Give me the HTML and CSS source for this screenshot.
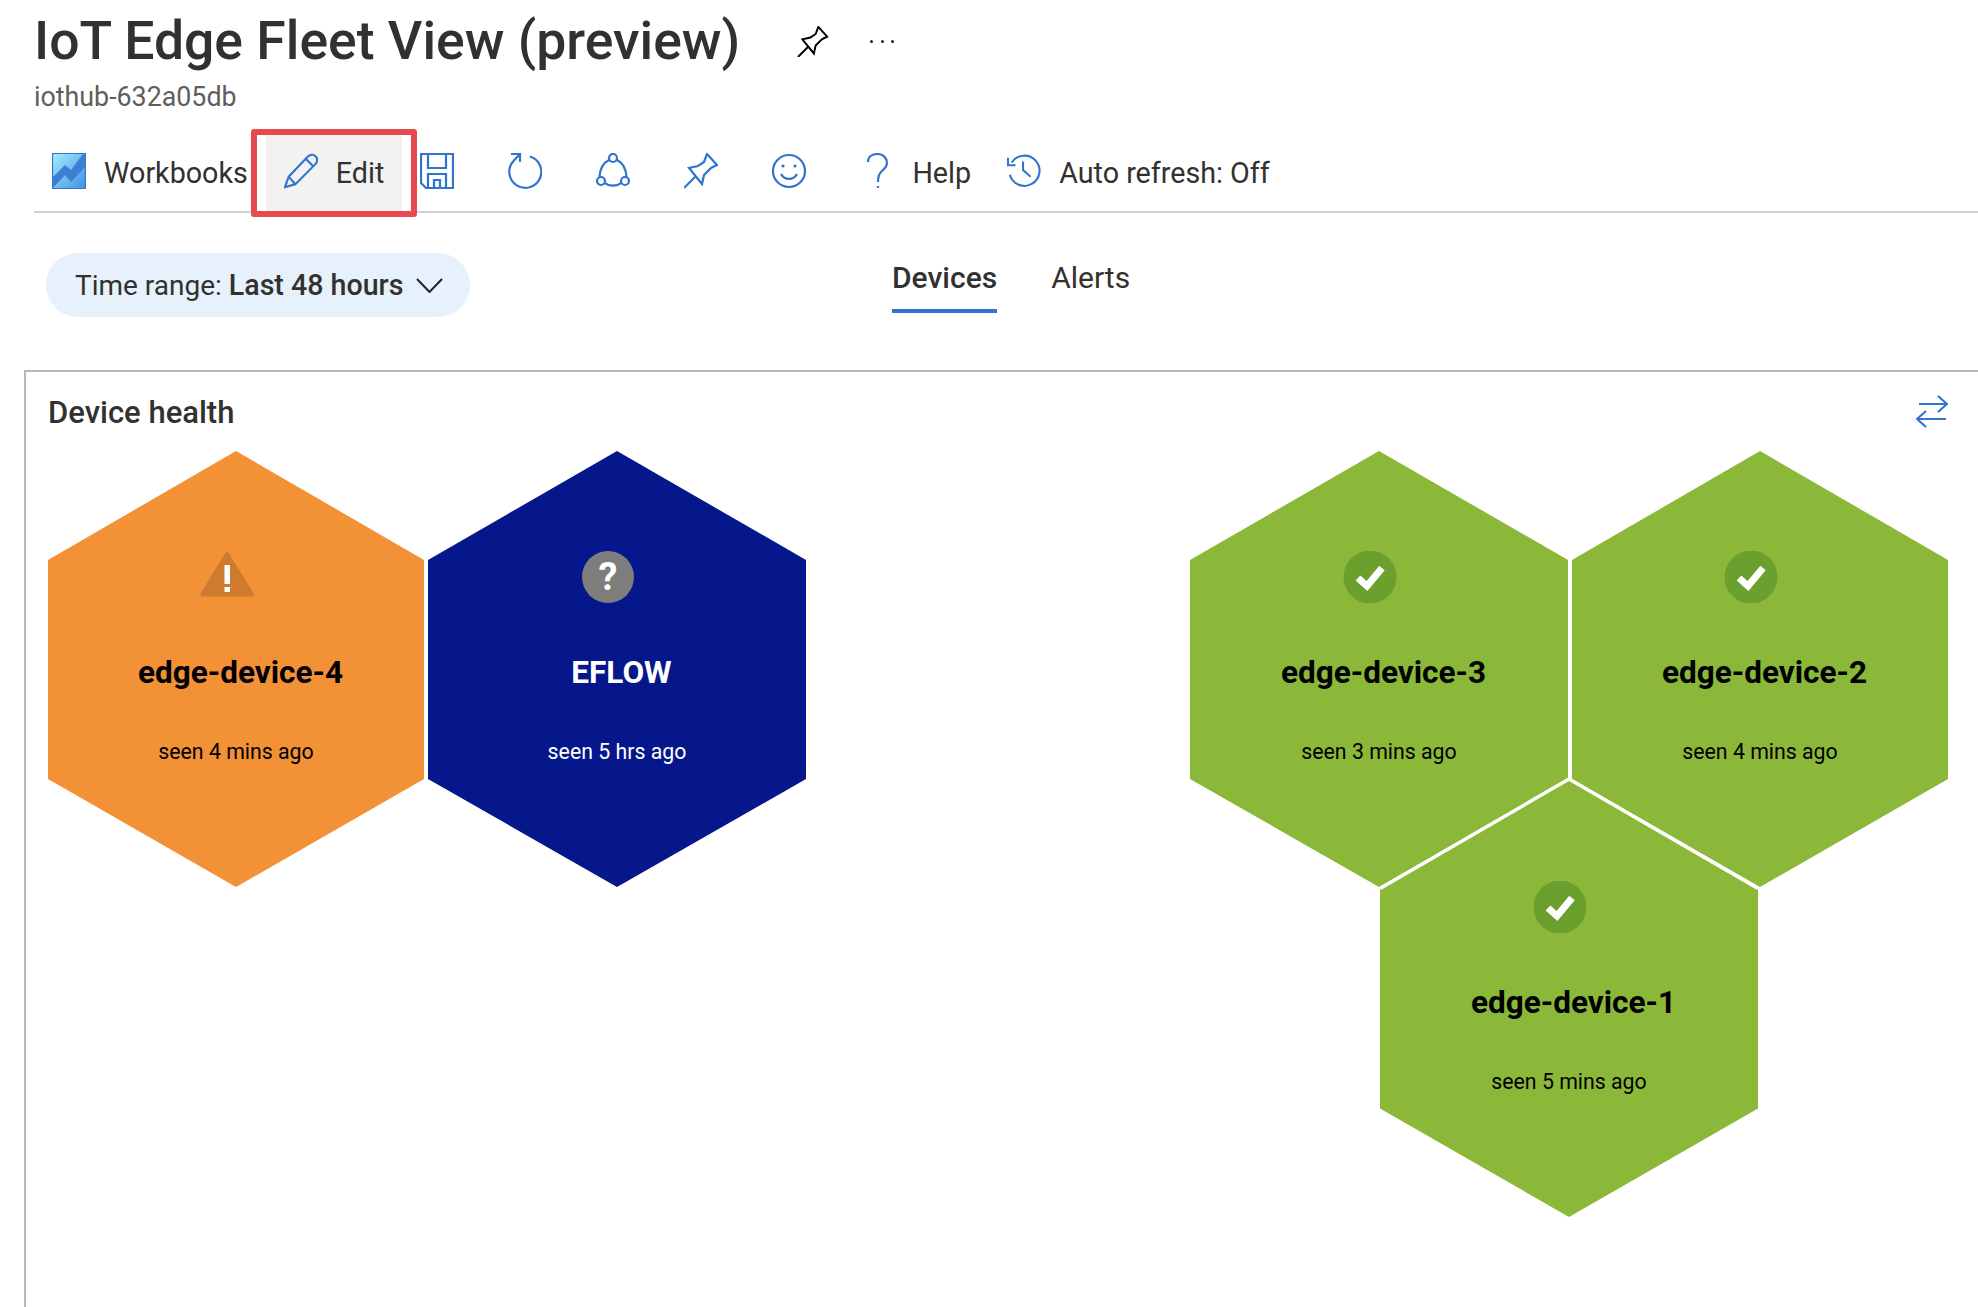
FILE: index.html
```html
<!DOCTYPE html>
<html lang="en">
<head>
  <meta charset="UTF-8" />
  <title>IoT Edge Fleet View (preview)</title>
  <link rel="stylesheet" href="styles.css">
</head>
<body>

  <header class="title-bar">
    <div class="title-row">
      <h1>IoT Edge Fleet View (preview)</h1>
      <svg class="title-pin" viewBox="0 0 34 35"><path d="M23 1 33 12 27 15 20 22 18 31 5 15 14 13 20 9ZM11 24 0 35"/></svg>
      <div class="title-more"><span></span><span></span><span></span></div>
    </div>
    <p class="subtitle">iothub-632a05db</p>
  </header>

  <nav class="toolbar">
    <a class="tool">
      <svg class="tool-icon" viewBox="0 0 34 36">
        <defs>
          <linearGradient id="wb" x1="0" y1="0" x2="1" y2="1">
            <stop offset="0" stop-color="#a6effd"/>
            <stop offset="1" stop-color="#3f8fe4"/>
          </linearGradient>
        </defs>
        <rect width="34" height="36" rx="2" fill="url(#wb)"/>
        <path class="wb-band" d="M0 25 13 12 19 17 31 1 34 3V13L19 29 13 22 0 36Z"/>
      </svg>
      <span class="tool-label">Workbooks</span>
    </a>
    <a class="tool tool-marked">
      <svg class="tool-icon" viewBox="0 0 36 36"><path d="M1 35 5 24 25 3C28 0 32 0 34 3 36 6 35 9 33 11L12 32ZM5 24 12 32M23 5 31 13"/></svg>
      <span class="tool-label">Edit</span>
    </a>
    <a class="tool">
      <svg class="tool-icon" viewBox="0 0 34 36"><path d="M1 1H33V35H6L1 30ZM8 1V15H26V1M8 35V21H26V35M14 35V27H20V35"/></svg>
    </a>
    <a class="tool">
      <svg class="tool-icon" viewBox="0 0 34 36"><path d="M22 3.5A16 16 0 1 1 5.5 8L12 1M3 1H12V9"/></svg>
    </a>
    <a class="tool">
      <svg class="tool-icon" viewBox="0 0 34 36"><circle cx="17" cy="5" r="4"/><circle cx="5" cy="28" r="4"/><circle cx="29" cy="28" r="4"/><path d="M13 7C7 10 4 16 3.5 24M21 7C27 10 30 16 30.5 24M9 30C13 33.5 21 33.5 25 30"/></svg>
    </a>
    <a class="tool">
      <svg class="tool-icon" viewBox="0 0 34 36"><path d="M23 1 33 12 27 15 20 22 18 31 5 15 14 13 20 9ZM11 24 0 35"/></svg>
    </a>
    <a class="tool">
      <svg class="tool-icon" viewBox="0 0 34 36"><circle cx="17" cy="18" r="16"/><path d="M9 21A9 9 0 0 0 25 21"/><circle class="solid" cx="11" cy="13" r="1.6"/><circle class="solid" cx="23" cy="13" r="1.6"/></svg>
    </a>
    <a class="tool">
      <svg class="tool-icon" viewBox="0 0 34 36"><path d="M8 9C8 4 12 1 17.5 1 23 1 27 5 27 10 27 14 24 16 21 19 19 21 18 23 18 29M18 33V35"/></svg>
      <span class="tool-label">Help</span>
    </a>
    <a class="tool">
      <svg class="tool-icon" viewBox="0 0 36 36"><path d="M3 22A16 16 0 1 0 5 9M1 4V12H9M17 8V17L25 24"/></svg>
      <span class="tool-label">Auto refresh: Off</span>
    </a>
  </nav>

  <div class="filter-row">
    <button class="time-pill">
      Time range:&nbsp;<b>Last 48 hours</b>
      <svg class="chevron" viewBox="0 0 27 15"><path d="M1 1 13.500 14 26 1"/></svg>
    </button>
    <div class="tabs">
      <a class="tab tab-active">Devices</a>
      <a class="tab">Alerts</a>
    </div>
  </div>

  <main class="panel">
    <div class="panel-head">
      <h2>Device health</h2>
      <svg class="swap" viewBox="0 0 32 33"><path d="M3 9H31M22 1 31 9 22 17M30 24H1M10 16 1 24 10 32"/></svg>
    </div>

    <div class="hex-map">
      <div class="hex hex-4 warn">
        <svg class="hex-shape" viewBox="0 0 378 436" preserveAspectRatio="none"><polygon points="189,0 378,109 378,328 189,436 0,328 0,109"/></svg>
        <div class="hex-icon">
          <svg viewBox="0 0 54 52"><path class="warn-tri" d="M27 4 51 43H3Z"/><rect class="warn-mark" x="24.500" y="14" width="5.500" height="19"/><rect class="warn-mark" x="24.500" y="36" width="5.500" height="5"/></svg>
        </div>
        <div class="hex-name">edge-device-4</div>
        <div class="hex-seen">seen 4 mins ago</div>
      </div>

      <div class="hex hex-eflow unknown">
        <svg class="hex-shape" viewBox="0 0 378 436" preserveAspectRatio="none"><polygon points="189,0 378,109 378,328 189,436 0,328 0,109"/></svg>
        <div class="hex-icon"><span class="question">?</span></div>
        <div class="hex-name">EFLOW</div>
        <div class="hex-seen">seen 5 hrs ago</div>
      </div>

      <div class="hex hex-3 ok">
        <svg class="hex-shape" viewBox="0 0 378 436" preserveAspectRatio="none"><polygon points="189,0 378,109 378,328 189,436 0,328 0,109"/></svg>
        <div class="hex-icon">
          <svg viewBox="0 0 54 52"><circle class="ok-badge" cx="27" cy="26" r="26.500"/><path class="ok-check" d="M15 27 24 35 39 17"/></svg>
        </div>
        <div class="hex-name">edge-device-3</div>
        <div class="hex-seen">seen 3 mins ago</div>
      </div>

      <div class="hex hex-2 ok">
        <svg class="hex-shape" viewBox="0 0 378 436" preserveAspectRatio="none"><polygon points="189,0 378,109 378,328 189,436 0,328 0,109"/></svg>
        <div class="hex-icon">
          <svg viewBox="0 0 54 52"><circle class="ok-badge" cx="27" cy="26" r="26.500"/><path class="ok-check" d="M15 27 24 35 39 17"/></svg>
        </div>
        <div class="hex-name">edge-device-2</div>
        <div class="hex-seen">seen 4 mins ago</div>
      </div>

      <div class="hex hex-1 ok">
        <svg class="hex-shape" viewBox="0 0 378 436" preserveAspectRatio="none"><polygon points="189,0 378,109 378,328 189,436 0,328 0,109"/><polyline class="hex-seam" points="0,109 189,0 378,109"/></svg>
        <div class="hex-icon">
          <svg viewBox="0 0 54 52"><circle class="ok-badge" cx="27" cy="26" r="26.500"/><path class="ok-check" d="M15 27 24 35 39 17"/></svg>
        </div>
        <div class="hex-name">edge-device-1</div>
        <div class="hex-seen">seen 5 mins ago</div>
      </div>
    </div>
  </main>

</body>
</html>
```

FILE: styles.css
```css
html, body {
  height: 100%;
}

body {
  margin: 0;
  display: flex;
  flex-direction: column;
  overflow: hidden;
  background: #fff;
  color: #323130;
  font-family: Roboto, sans-serif;
}

/* title */
.title-bar {
  padding: 13px 0 18px 34px;
}

.title-row {
  display: flex;
  align-items: center;
  height: 56px;
}

h1 {
  margin: 0;
  font-size: 53.5px;
  font-weight: 500;
  line-height: 56px;
}

.title-pin {
  width: 34px;
  height: 31px;
  margin: 0 0 0 56px;
  fill: none;
  stroke: #000;
  stroke-width: 2.2;
}

.title-more {
  display: flex;
  gap: 7.5px;
  margin-left: 40px;
}

.title-more span {
  width: 3px;
  height: 3px;
  border-radius: 50%;
  background: #222;
}

.subtitle {
  margin: 12px 0 0;
  color: #605e5c;
  font-size: 26.8px;
  line-height: 32px;
}

/* toolbar */
.toolbar {
  display: flex;
  align-items: center;
  height: 80px;
  margin: 0 0 0 34px;
  border-bottom: 2px solid #d2d0ce;
  font-size: 28.7px;
}

.tool {
  position: relative;
  display: flex;
  align-items: center;
  height: 100%;
  padding: 0 18px;
}

.tool-icon {
  width: 34px;
  height: 36px;
  margin-right: 18px;
  fill: none;
  stroke: #2f74d0;
  stroke-width: 2.2;
}

.tool-label {
  padding-top: 4px;
}

.tool-icon .solid {
  fill: #2f74d0;
  stroke: none;
}

.wb-band {
  fill: #3c7ed3;
  stroke: none;
}

.tool-marked {
  background: #f3f2f1;
}

/* the red box drawn over the Edit button */
.tool-marked::after {
  content: "";
  position: absolute;
  left: -15px;
  right: -15px;
  top: -2px;
  bottom: -6px;
  border: 6px solid #e8484f;
  border-radius: 3px;
}

/* filter row */
.filter-row {
  position: relative;
  height: 157px;
}

.time-pill {
  position: absolute;
  left: 46px;
  top: 40px;
  display: flex;
  align-items: center;
  width: 424px;
  height: 64px;
  padding: 0 0 0 29px;
  border: 0;
  border-radius: 32px;
  background: #e6f1fb;
  color: #323130;
  font: inherit;
  font-size: 28px;
}

.time-pill b {
  font-size: 28.6px;
  font-weight: 500;
}

.chevron {
  width: 27px;
  height: 15px;
  margin-left: 13px;
  fill: none;
  stroke: #222;
  stroke-width: 2;
}

.tabs {
  position: absolute;
  left: 892px;
  top: 45px;
  display: flex;
  gap: 54px;
  font-size: 30px;
}

.tab {
  height: 51px;
  line-height: 40px;
}

.tab-active {
  font-weight: 500;
  border-bottom: 4px solid #2f74d0;
}

/* panel */
.panel {
  flex: 1;
  margin-left: 24px;
  padding: 0 30px 0 22px;
  border-top: 2px solid #b8b8b8;
  border-left: 2px solid #b8b8b8;
}

.panel-head {
  display: flex;
  align-items: center;
  justify-content: space-between;
  height: 79px;
}

h2 {
  margin: 2px 0 0;
  font-size: 31px;
  font-weight: 500;
}

.swap {
  width: 32px;
  height: 33px;
  fill: none;
  stroke: #2f74d0;
  stroke-width: 2.2;
}

.hex-map {
  position: relative;
  height: 766px;
}

.hex {
  position: absolute;
  display: flex;
  flex-direction: column;
  align-items: center;
  width: 378px;
  height: 436px;
  padding-top: 100px;
  box-sizing: border-box;
  color: #000;
}

.hex-4 { left: 0; top: 0; width: 376px; }
.hex-eflow { left: 380px; top: 0; }
.hex-3 { left: 1142px; top: 0; }
.hex-2 { left: 1524px; top: 0; width: 376px; }
.hex-1 { left: 1332px; top: 328px; height: 438px; padding-top: 102px; }

.hex-shape {
  position: absolute;
  left: 0;
  top: 0;
  width: 100%;
  height: 100%;
  overflow: visible;
}

.hex-seam {
  fill: none;
  stroke: #fff;
  stroke-width: 3.5;
}

.warn .hex-shape { fill: #f29136; }
.unknown .hex-shape { fill: #05178a; }
.ok .hex-shape { fill: #8bb838; }

.unknown {
  color: #fff;
}

.hex-icon {
  position: relative;
  width: 54px;
  height: 52px;
  margin-right: 18px;
}

.hex-icon svg {
  display: block;
  width: 54px;
  height: 52px;
}

.warn-tri {
  fill: #cd7c2f;
  stroke: #cd7c2f;
  stroke-width: 5;
  stroke-linejoin: round;
}

.warn-mark {
  fill: #fff;
}

.question {
  display: block;
  width: 52px;
  height: 52px;
  margin-left: 1px;
  border-radius: 50%;
  background: #7d7d7d;
  color: #fff;
  font-size: 38px;
  font-weight: 700;
  line-height: 52px;
  text-align: center;
}

.ok-badge {
  fill: #6ba02e;
}

.ok-check {
  fill: none;
  stroke: #fff;
  stroke-width: 7;
}

.hex-name {
  position: relative;
  margin: 50px 0 0 9px;
  font-size: 31.5px;
  font-weight: 700;
  line-height: 40px;
}

.hex-seen {
  position: relative;
  margin-top: 45px;
  font-size: 21.3px;
  line-height: 28px;
}
```
